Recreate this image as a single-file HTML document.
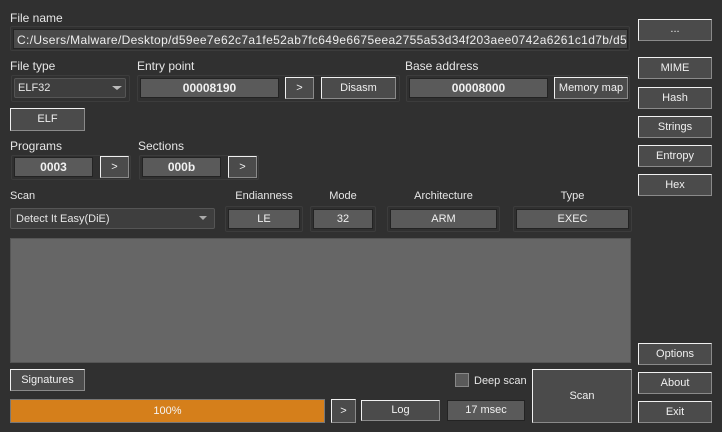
<!DOCTYPE html>
<html><head><style>
html,body{margin:0;padding:0}
body{width:722px;height:432px;background:#303030;position:relative;overflow:hidden;font-family:"Liberation Sans",sans-serif;font-size:12px;color:#e6e6e6}
div{position:absolute;box-sizing:border-box}
.l{white-space:nowrap}
.b{background:#4b4b4b;border:1px solid;border-color:#f0f0f0 #8a8a8a #8a8a8a #f0f0f0;text-align:center;color:#f0f0f0;font-size:11px;white-space:nowrap}
.f{background:#5a5a5a;border:1px solid #232323;text-align:center;font-weight:bold;color:#f0f0f0}
.g{border:1px solid #3c3c3c;border-radius:2px}
</style></head><body>
<div class="l" style="left:10px;top:11px">File name</div>
<div class="g" style="left:10px;top:26px;width:620px;height:25px"></div>
<div class="f" style="left:13px;top:29px;width:615px;height:20px;background:#4a4a4a;text-align:left;font-weight:normal;padding:3px 0 0 3px;overflow:hidden;white-space:nowrap;color:#eee;font-size:12px;letter-spacing:0.35px">C:/Users/Malware/Desktop/d59ee7e62c7a1fe52ab7fc649e6675eea2755a53d34f203aee0742a6261c1d7b/d59ee7e62c7a1fe52</div>
<div class="b" style="left:638px;top:19px;width:74px;height:22px;line-height:18px">...</div>

<div class="l" style="left:10px;top:59px">File type</div>
<div class="g" style="left:11px;top:75px;width:119px;height:27px"></div>
<div style="left:14px;top:78px;width:112px;height:20px;background:#3e3e3e;border:1px solid #555;border-radius:2px;padding:3px 0 0 3px;font-size:11px">ELF32</div>
<div style="left:112px;top:86px;width:0;height:0;border-left:5px solid transparent;border-right:5px solid transparent;border-top:4px solid #bbb"></div>

<div class="l" style="left:137px;top:59px">Entry point</div>
<div class="g" style="left:137px;top:75px;width:263px;height:27px"></div>
<div class="f" style="left:140px;top:78px;width:139px;height:20px;line-height:18px">00008190</div>
<div class="b" style="left:285px;top:77px;width:29px;height:22px;line-height:20px">&gt;</div>
<div class="b" style="left:321px;top:77px;width:75px;height:22px;line-height:20px">Disasm</div>

<div class="l" style="left:405px;top:59px">Base address</div>
<div class="g" style="left:406px;top:75px;width:224px;height:27px"></div>
<div class="f" style="left:409px;top:78px;width:139px;height:20px;line-height:18px">00008000</div>
<div class="b" style="left:554px;top:77px;width:74px;height:22px;line-height:20px">Memory map</div>

<div class="b" style="left:638px;top:57px;width:74px;height:22px;line-height:20px">MIME</div>
<div class="b" style="left:638px;top:87px;width:74px;height:22px;line-height:20px">Hash</div>
<div class="b" style="left:638px;top:116px;width:74px;height:22px;line-height:20px">Strings</div>
<div class="b" style="left:638px;top:145px;width:74px;height:22px;line-height:20px">Entropy</div>
<div class="b" style="left:638px;top:174px;width:74px;height:22px;line-height:20px">Hex</div>

<div class="b" style="left:10px;top:108px;width:75px;height:23px;line-height:21px">ELF</div>

<div class="l" style="left:10px;top:139px">Programs</div>
<div class="g" style="left:11px;top:155px;width:120px;height:25px"></div>
<div class="f" style="left:14px;top:157px;width:79px;height:20px;line-height:18px">0003</div>
<div class="b" style="left:100px;top:156px;width:29px;height:22px;line-height:20px">&gt;</div>
<div class="l" style="left:138px;top:139px">Sections</div>
<div class="g" style="left:139px;top:155px;width:120px;height:25px"></div>
<div class="f" style="left:142px;top:157px;width:79px;height:20px;line-height:18px">000b</div>
<div class="b" style="left:228px;top:156px;width:29px;height:22px;line-height:20px">&gt;</div>

<div class="l" style="left:10px;top:190px;font-size:11px">Scan</div>
<div style="left:10px;top:208px;width:205px;height:21px;background:#3e3e3e;border:1px solid #555;border-radius:2px;padding:4px 0 0 5px;font-size:11px">Detect It Easy(DiE)</div>
<div style="left:199px;top:216px;width:0;height:0;border-left:4px solid transparent;border-right:4px solid transparent;border-top:4px solid #aaa"></div>

<div class="l" style="left:228px;top:190px;width:72px;text-align:center;font-size:11px">Endianness</div>
<div class="g" style="left:225px;top:206px;width:78px;height:26px"></div>
<div class="f" style="left:228px;top:209px;width:72px;height:20px;line-height:18px;font-weight:normal;font-size:11px">LE</div>
<div class="l" style="left:313px;top:190px;width:60px;text-align:center;font-size:11px">Mode</div>
<div class="g" style="left:310px;top:206px;width:66px;height:26px"></div>
<div class="f" style="left:313px;top:209px;width:60px;height:20px;line-height:18px;font-weight:normal;font-size:11px">32</div>
<div class="l" style="left:390px;top:190px;width:107px;text-align:center;font-size:11px">Architecture</div>
<div class="g" style="left:387px;top:206px;width:113px;height:26px"></div>
<div class="f" style="left:390px;top:209px;width:107px;height:20px;line-height:18px;font-weight:normal;font-size:11px">ARM</div>
<div class="l" style="left:516px;top:190px;width:113px;text-align:center;font-size:11px">Type</div>
<div class="g" style="left:513px;top:206px;width:119px;height:26px"></div>
<div class="f" style="left:516px;top:209px;width:113px;height:20px;line-height:18px;font-weight:normal;font-size:11px">EXEC</div>

<div style="left:10px;top:238px;width:621px;height:125px;background:#666;border:1px solid #555"></div>

<div class="b" style="left:638px;top:343px;width:74px;height:22px;line-height:20px">Options</div>
<div class="b" style="left:638px;top:372px;width:74px;height:22px;line-height:20px">About</div>
<div class="b" style="left:638px;top:401px;width:74px;height:22px;line-height:20px">Exit</div>

<div class="b" style="left:10px;top:369px;width:75px;height:22px;line-height:20px">Signatures</div>
<div style="left:455px;top:373px;width:14px;height:14px;background:#5a5a5a;border:1px solid #888"></div>
<div class="l" style="left:474px;top:375px;font-size:11px">Deep scan</div>
<div class="b" style="left:532px;top:369px;width:100px;height:54px;line-height:52px">Scan</div>

<div style="left:10px;top:399px;width:315px;height:24px;background:#d57f1b;border:1px solid #777;text-align:center;line-height:22px;color:#f4f4f4;font-size:11px">100%</div>
<div class="b" style="left:331px;top:399px;width:25px;height:24px;line-height:22px">&gt;</div>
<div class="b" style="left:361px;top:400px;width:79px;height:21px;line-height:19px">Log</div>
<div class="f" style="left:447px;top:400px;width:78px;height:21px;line-height:19px;font-weight:normal;font-size:11px">17 msec</div>
</body></html>
